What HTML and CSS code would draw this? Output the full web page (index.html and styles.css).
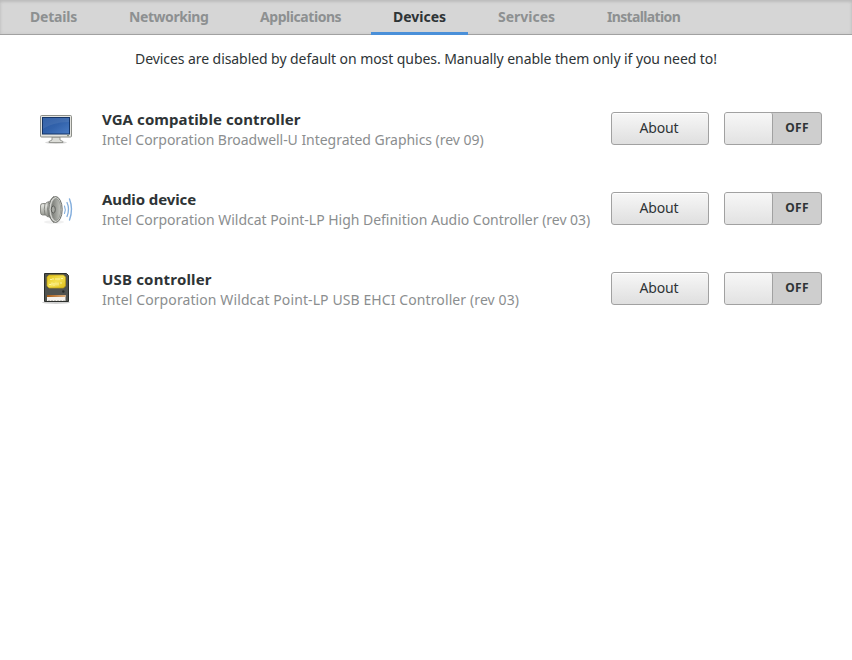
FILE: index.html
```html
<!DOCTYPE html>
<html lang="en">
<head>
<meta charset="utf-8">
<title>Devices</title>
<link rel="stylesheet" href="styles.css">
</head>
<body>
<nav class="tabs">
  <a class="tab details">Details</a>
  <a class="tab networking">Networking</a>
  <a class="tab applications">Applications</a>
  <a class="tab devices active">Devices</a>
  <a class="tab services">Services</a>
  <a class="tab installation">Installation</a>
</nav>
<main>
  <p class="notice">Devices are disabled by default on most qubes. Manually enable them only if you need to!</p>
  <ul class="device-list">
    <li class="device vga">
      <svg class="icon" viewBox="0 0 40 40">
        <defs>
          <linearGradient id="screen" x1="0" y1="0" x2="1" y2="1"><stop offset="0" stop-color="#2455a0"/><stop offset=".5" stop-color="#3262ab"/><stop offset="1" stop-color="#4a7cc4"/></linearGradient>
        </defs>
        <ellipse cx="20" cy="34.5" rx="11" ry="1.5" fill="#000" opacity=".15"/>
        <path d="M16 29h8v3l3 1.500v1H13v-1l3-1.500z" fill="#dcddd8" stroke="#858782" stroke-width=".8"/>
        <rect x="4.500" y="7.500" width="31" height="21.500" rx="1" fill="#e4e4df" stroke="#8c8e88"/>
        <rect x="6.500" y="9.500" width="27" height="16.500" fill="url(#screen)" stroke="#153567"/>
        <path d="M7 10h26v4C22 14 13 17 7 21z" fill="#fff" opacity=".08"/>
        <path d="M31 27.700h2" stroke="#73806d"/>
      </svg>
      <div class="info"><h2>VGA compatible controller</h2><p>Intel Corporation Broadwell-U Integrated Graphics (rev 09)</p></div>
      <button class="about">About</button>
      <button class="switch"><i class="knob"></i><b>OFF</b></button>
    </li>
    <li class="device audio">
      <svg class="icon" viewBox="0 0 40 40">
        <defs>
          <linearGradient id="metal" x1="0" y1="0" x2="0" y2="1"><stop offset="0" stop-color="#8c8e88"/><stop offset=".35" stop-color="#e0e1dd"/><stop offset=".65" stop-color="#a4a69f"/><stop offset="1" stop-color="#60625d"/></linearGradient>
          <linearGradient id="cone" x1="0" y1="0" x2="1" y2="0"><stop offset="0" stop-color="#747671"/><stop offset="1" stop-color="#c4c6c0"/></linearGradient>
        </defs>
        <ellipse cx="18" cy="34" rx="10" ry="1.700" fill="#000" opacity=".06"/>
        <path d="M4.500 18q0-2.500 2-2.500h3q1-1.500 4-2l4-5v26l-4-5.500q-3 0-4-2h-3q-2 0-2-3z" fill="url(#metal)" stroke="#777973" stroke-width=".8"/>
        <path d="M9 15.500q-1.500 6 0 11.500M12.500 14q-2 7 0 14" fill="none" stroke="#777973" stroke-width=".8"/>
        <ellipse cx="19.500" cy="21.500" rx="6.700" ry="13" fill="#d4d5d1" stroke="#6b6d68"/>
        <ellipse cx="20" cy="21.500" rx="4.800" ry="11" fill="url(#cone)" stroke="#8a8c86" stroke-width=".7"/>
        <ellipse cx="17.300" cy="21.500" rx="2" ry="3.500" fill="#a6a8a2" stroke="#4f514d" stroke-width=".8"/>
        <g fill="none" stroke="#83aedd" stroke-linecap="round"><path d="M28.500 18q1.500 3.500 0 7.500" stroke-width="1.100"/><path d="M31 14.500q3 6.500 0 14" stroke-width="1.300"/><path d="M33.500 11q4 10 0 21" stroke-width="1.400"/></g>
      </svg>
      <div class="info"><h2>Audio device</h2><p>Intel Corporation Wildcat Point-LP High Definition Audio Controller (rev 03)</p></div>
      <button class="about">About</button>
      <button class="switch"><i class="knob"></i><b>OFF</b></button>
    </li>
    <li class="device usb">
      <svg class="icon" viewBox="0 0 40 40">
        <defs>
          <linearGradient id="gold" x1="0" y1="0" x2="1" y2="1"><stop offset="0" stop-color="#e2c31c"/><stop offset=".5" stop-color="#f3e050"/><stop offset="1" stop-color="#dcbb16"/></linearGradient>
          <linearGradient id="label" x1="0" y1="0" x2="1" y2="0"><stop offset="0" stop-color="#a85a12"/><stop offset="1" stop-color="#dcae7c"/></linearGradient>
        </defs>
        <ellipse cx="20" cy="34.500" rx="14" ry="1.500" fill="#000" opacity=".18"/>
        <path d="M8.500 5.500h22l2 2v26h-24z" fill="#50534f" stroke="#2b2e2b"/>
        <path d="M13 7h14.500l2 2v9l-2 2h-14.500l-2-2v-9z" fill="url(#gold)" stroke="#bd9f13" stroke-width=".7"/>
        <path d="M14 11.500h2m1-1.500v2m2-1h3m1-1v2m2-1.500h2M13 16.500h2m1-2v3m2-2.500v3m2-3.500v3m2-3v3m3-3.500v2" fill="none" stroke="#fff8ac" stroke-width=".9"/>
        <circle cx="27.300" cy="23.500" r="1.200" fill="#292c29"/>
        <path d="M11 27h18.500v6H11z" fill="#f5f2ed"/><path d="M11 27h18.500v2H11z" fill="url(#label)"/>
        <path d="M13 32v1m3-1v1m3-1v1m3-1v1m3-1v1m3-1v1" stroke="#9a9b98"/>
      </svg>
      <div class="info"><h2>USB controller</h2><p>Intel Corporation Wildcat Point-LP USB EHCI Controller (rev 03)</p></div>
      <button class="about">About</button>
      <button class="switch"><i class="knob"></i><b>OFF</b></button>
    </li>
  </ul>
</main>
</body>
</html>
```
FILE: styles.css
```css
* { box-sizing: border-box; }
body { margin: 0; background: #fff; color: #2e3436; font-family: "Noto Sans", sans-serif; font-size: 14px; }

.tabs { display: flex; gap: 8px; height: 35px; padding-left: 8px; background: #d6d6d6; border-bottom: 1px solid #a1a1a1; box-shadow: inset 0 2px 3px rgba(0,0,0,.1), inset 0 0 4px rgba(0,0,0,.05); }
.tab { flex: none; height: 35px; padding-left: 22px; line-height: 34px; font-weight: 700; color: #8d9091; white-space: nowrap; }
.tab.active { color: #2e3436; border-bottom: 3px solid #4a90d9; }
.details { width: 91px; letter-spacing: -.21px; }
.networking { width: 123px; letter-spacing: -.42px; }
.applications { width: 125px; letter-spacing: -.44px; }
.devices { width: 97px; }
.services { width: 101px; }
.installation { width: 118px; letter-spacing: -.65px; }

.notice { margin: 0; height: 48px; line-height: 48px; text-align: center; white-space: nowrap; letter-spacing: -.07px; }
.device-list { list-style: none; margin: 0; padding: 5px 30px 0 36px; }
.device { display: flex; height: 80px; padding-top: 20px; }
.icon { width: 40px; height: 40px; flex: none; }
.info { flex: 1; min-width: 0; margin-left: 26px; padding-top: 1px; white-space: nowrap; }
h2, .info p { margin: 0; line-height: 21px; }
h2 { font-size: 15px; }
.info p { margin-top: -1px; color: #8b8e8f; letter-spacing: -.02px; }
.vga h2 { letter-spacing: .08px; }
.vga p { letter-spacing: -.04px; }
.audio h2 { letter-spacing: -.1px; }
.usb h2 { letter-spacing: .18px; }
.usb p { letter-spacing: .1px; }

button { flex: none; width: 98px; height: 33px; margin-top: 4px; padding: 0; border: 1px solid #a1a1a1; border-radius: 3px; font: inherit; color: #2e3436; }
.about { padding: 0 2px 2px 0; letter-spacing: -.15px; background: linear-gradient(#f7f7f7, #dfdfdf); box-shadow: inset 0 1px #fff; }
.switch { display: flex; margin-left: 15px; background: #cecece; }
.knob { width: 48px; height: 31px; border-right: 1px solid #a1a1a1; border-radius: 2px; background: linear-gradient(#f7f7f7, #e2e2e2); }
.switch b { flex: 1; font-size: 12px; line-height: 30px; letter-spacing: .3px; }
```
